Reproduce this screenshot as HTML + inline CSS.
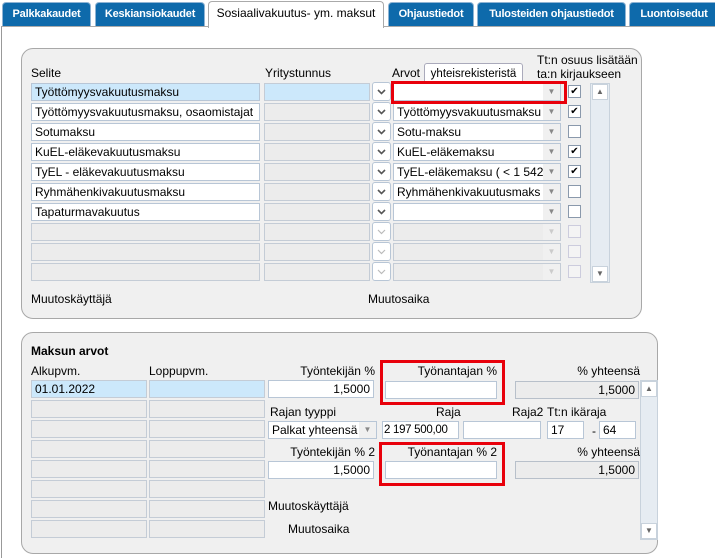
<!DOCTYPE html>
<html><head><meta charset="utf-8"><style>
*{box-sizing:border-box;margin:0;padding:0}
body{width:715px;height:558px;background:#fff;font-family:"Liberation Sans",Arial,sans-serif;font-size:12px;color:#000;position:relative;overflow:hidden}
.a{position:absolute;white-space:nowrap}
.tab{position:absolute;top:2px;height:24px;background:#0e6aab;color:#fff;font-weight:bold;font-size:11px;line-height:23px;text-align:center;border:1px solid #8fb4d4;border-bottom:none;border-radius:4px 4px 0 0;letter-spacing:-0.2px}
.tab.on{background:#fff;color:#000;font-weight:normal;font-size:12px;border:1px solid #aaa;border-bottom:none;top:1px;height:27px;letter-spacing:0}
.frame{position:absolute;left:1px;top:26px;width:714px;height:532px;border-left:1px solid #999;border-top:1px solid #aaa}
.panel{position:absolute;background:#f0f0f0;border:1px solid #a8a8a8;border-radius:12px}
.in{position:absolute;height:18px;border:1px solid #b8c6d6;background:#fff;padding:0 3px;line-height:16px;overflow:hidden;white-space:nowrap}
.g{background:#ececec;border-color:#c4ccd6}
.b{background:#cce8fb}
.r{text-align:right}
.dd{position:absolute;width:19px;height:19px;border:1px solid #b8c6d6;border-radius:3px;background:#fff}
.dd svg{position:absolute;left:4px;top:6px}
.arr{position:absolute;right:0;top:0;width:17px;height:16px;background:#f0f0f0;color:#888;font-size:8px;text-align:center;line-height:16px}
.cb{position:absolute;width:13px;height:13px;border:1px solid #8a99ac;background:#fff;font-size:10px;line-height:11px;text-align:center}
.cb.d{border-color:#ccd;background:#f4f4f4}
.red{position:absolute;border:3px solid #e8000b}
.sb{position:absolute;background:#e6ecf2;border:1px solid #c8d2dc}
.sbb{position:absolute;left:1px;width:16px;height:16px;background:#fff;border:1px solid #c8d2dc;color:#666;font-size:8px;text-align:center;line-height:14px}
</style></head><body>
<div class="frame"></div>
<div class="tab" style="left:2px;width:89px">Palkkakaudet</div>
<div class="tab" style="left:95px;width:110px">Keskiansiokaudet</div>
<div class="tab on" style="left:208px;width:176px">Sosiaalivakuutus- ym. maksut</div>
<div class="tab" style="left:388px;width:86px">Ohjaustiedot</div>
<div class="tab" style="left:477px;width:149px">Tulosteiden ohjaustiedot</div>
<div class="tab" style="left:629px;width:90px">Luontoisedut</div>

<div class="panel" style="left:21px;top:48px;width:621px;height:271px"></div>
<div class="a" style="left:31px;top:66px">Selite</div>
<div class="a" style="left:265px;top:66px">Yritystunnus</div>
<div class="a" style="left:392px;top:66px">Arvot</div>
<div class="a" style="left:424px;top:63px;width:99px;height:21px;border:1px solid #aab;border-bottom:none;border-radius:3px 3px 0 0;background:#fff;text-align:center;line-height:20px;font-size:11.5px">yhteisrekisteristä</div>
<div class="a" style="left:537px;top:53px">Tt:n osuus lisätään</div>
<div class="a" style="left:537px;top:67px">ta:n kirjaukseen</div>

<div class="in b" style="left:31px;top:83px;width:229px">Työttömyysvakuutusmaksu</div>
<div class="in" style="left:31px;top:103px;width:229px">Työttömyysvakuutusmaksu, osaomistajat</div>
<div class="in" style="left:31px;top:123px;width:229px">Sotumaksu</div>
<div class="in" style="left:31px;top:143px;width:229px">KuEL-eläkevakuutusmaksu</div>
<div class="in" style="left:31px;top:163px;width:229px">TyEL - eläkevakuutusmaksu</div>
<div class="in" style="left:31px;top:183px;width:229px">Ryhmähenkivakuutusmaksu</div>
<div class="in" style="left:31px;top:203px;width:229px">Tapaturmavakuutus</div>
<div class="in g" style="left:31px;top:223px;width:229px"></div>
<div class="in g" style="left:31px;top:243px;width:229px"></div>
<div class="in g" style="left:31px;top:263px;width:229px"></div>

<div class="in b" style="left:264px;top:83px;width:106px;border-color:#c4ccd6"></div>
<div class="in g" style="left:264px;top:103px;width:106px"></div>
<div class="in g" style="left:264px;top:123px;width:106px"></div>
<div class="in g" style="left:264px;top:143px;width:106px"></div>
<div class="in g" style="left:264px;top:163px;width:106px"></div>
<div class="in g" style="left:264px;top:183px;width:106px"></div>
<div class="in g" style="left:264px;top:203px;width:106px"></div>
<div class="in g" style="left:264px;top:223px;width:106px"></div>
<div class="in g" style="left:264px;top:243px;width:106px"></div>
<div class="in g" style="left:264px;top:263px;width:106px"></div>

<div class="dd" style="left:372px;top:82px"><svg width="9" height="6"><path d="M1 1L4.5 4.5L8 1" stroke="#555" stroke-width="1.6" fill="none"/></svg></div>
<div class="dd" style="left:372px;top:102px"><svg width="9" height="6"><path d="M1 1L4.5 4.5L8 1" stroke="#555" stroke-width="1.6" fill="none"/></svg></div>
<div class="dd" style="left:372px;top:122px"><svg width="9" height="6"><path d="M1 1L4.5 4.5L8 1" stroke="#555" stroke-width="1.6" fill="none"/></svg></div>
<div class="dd" style="left:372px;top:142px"><svg width="9" height="6"><path d="M1 1L4.5 4.5L8 1" stroke="#555" stroke-width="1.6" fill="none"/></svg></div>
<div class="dd" style="left:372px;top:162px"><svg width="9" height="6"><path d="M1 1L4.5 4.5L8 1" stroke="#555" stroke-width="1.6" fill="none"/></svg></div>
<div class="dd" style="left:372px;top:182px"><svg width="9" height="6"><path d="M1 1L4.5 4.5L8 1" stroke="#555" stroke-width="1.6" fill="none"/></svg></div>
<div class="dd" style="left:372px;top:202px"><svg width="9" height="6"><path d="M1 1L4.5 4.5L8 1" stroke="#555" stroke-width="1.6" fill="none"/></svg></div>
<div class="dd" style="left:372px;top:222px"><svg width="9" height="6"><path d="M1 1L4.5 4.5L8 1" stroke="#bbb" stroke-width="1.2" fill="none"/></svg></div>
<div class="dd" style="left:372px;top:242px"><svg width="9" height="6"><path d="M1 1L4.5 4.5L8 1" stroke="#bbb" stroke-width="1.2" fill="none"/></svg></div>
<div class="dd" style="left:372px;top:262px"><svg width="9" height="6"><path d="M1 1L4.5 4.5L8 1" stroke="#bbb" stroke-width="1.2" fill="none"/></svg></div>

<div class="in" style="left:393px;top:83px;width:168px"><span class="arr">&#9660;</span></div>
<div class="in" style="left:393px;top:103px;width:168px">Työttömyysvakuutusmaksu<span class="arr">&#9660;</span></div>
<div class="in" style="left:393px;top:123px;width:168px">Sotu-maksu<span class="arr">&#9660;</span></div>
<div class="in" style="left:393px;top:143px;width:168px">KuEL-eläkemaksu<span class="arr">&#9660;</span></div>
<div class="in" style="left:393px;top:163px;width:168px">TyEL-eläkemaksu ( &lt; 1 542<span class="arr">&#9660;</span></div>
<div class="in" style="left:393px;top:183px;width:168px">Ryhmähenkivakuutusmaks<span class="arr">&#9660;</span></div>
<div class="in" style="left:393px;top:203px;width:168px"><span class="arr">&#9660;</span></div>
<div class="in g" style="left:393px;top:223px;width:168px"><span class="arr" style="color:#ccc">&#9660;</span></div>
<div class="in g" style="left:393px;top:243px;width:168px"><span class="arr" style="color:#ccc">&#9660;</span></div>
<div class="in g" style="left:393px;top:263px;width:168px"><span class="arr" style="color:#ccc">&#9660;</span></div>
<div class="red" style="left:391px;top:81px;width:176px;height:23px"></div>

<div class="cb" style="left:568px;top:85px">&#10004;</div>
<div class="cb" style="left:568px;top:105px">&#10004;</div>
<div class="cb" style="left:568px;top:125px"></div>
<div class="cb" style="left:568px;top:145px">&#10004;</div>
<div class="cb" style="left:568px;top:165px">&#10004;</div>
<div class="cb" style="left:568px;top:185px"></div>
<div class="cb" style="left:568px;top:205px"></div>
<div class="cb d" style="left:568px;top:225px"></div>
<div class="cb d" style="left:568px;top:245px"></div>
<div class="cb d" style="left:568px;top:265px"></div>

<div class="sb" style="left:590px;top:83px;width:20px;height:200px">
<div class="sbb" style="top:0">&#9650;</div><div class="sbb" style="bottom:0">&#9660;</div></div>

<div class="a" style="left:31px;top:292px">Muutoskäyttäjä</div>
<div class="a" style="left:368px;top:292px">Muutosaika</div>

<div class="panel" style="left:21px;top:332px;width:637px;height:222px"></div>
<div class="a" style="left:31px;top:344px;font-weight:bold">Maksun arvot</div>
<div class="a" style="left:31px;top:364px">Alkupvm.</div>
<div class="a" style="left:149px;top:364px">Loppupvm.</div>

<div class="in b" style="left:31px;top:380px;width:116px;border-color:#c4ccd6">01.01.2022</div>
<div class="in b" style="left:149px;top:380px;width:116px;border-color:#c4ccd6"></div>
<div class="in g" style="left:31px;top:400px;width:116px"></div><div class="in g" style="left:149px;top:400px;width:116px"></div>
<div class="in g" style="left:31px;top:420px;width:116px"></div><div class="in g" style="left:149px;top:420px;width:116px"></div>
<div class="in g" style="left:31px;top:440px;width:116px"></div><div class="in g" style="left:149px;top:440px;width:116px"></div>
<div class="in g" style="left:31px;top:460px;width:116px"></div><div class="in g" style="left:149px;top:460px;width:116px"></div>
<div class="in g" style="left:31px;top:480px;width:116px"></div><div class="in g" style="left:149px;top:480px;width:116px"></div>
<div class="in g" style="left:31px;top:500px;width:116px"></div><div class="in g" style="left:149px;top:500px;width:116px"></div>
<div class="in g" style="left:31px;top:520px;width:116px"></div><div class="in g" style="left:149px;top:520px;width:116px"></div>

<div class="a" style="left:268px;top:364px;width:107px;text-align:right">Työntekijän %</div>
<div class="in r" style="left:268px;top:380px;width:106px">1,5000</div>
<div class="a" style="left:385px;top:364px;width:112px;text-align:right">Työnantajan %</div>
<div class="in" style="left:385px;top:381px;width:112px"></div>
<div class="red" style="left:380px;top:360px;width:125px;height:45px"></div>
<div class="a" style="left:515px;top:364px;width:125px;text-align:right">% yhteensä</div>
<div class="in g r" style="left:515px;top:381px;width:124px;border-color:#b8c0ca">1,5000</div>

<div class="a" style="left:270px;top:405px">Rajan tyyppi</div>
<div class="in" style="left:268px;top:421px;width:109px;padding-left:3px">Palkat yhteensä<span class="arr" style="height:16px">&#9660;</span></div>
<div class="a" style="left:436px;top:405px">Raja</div>
<div class="in" style="left:382px;top:421px;width:77px;padding:0 1px;font-size:11.5px;letter-spacing:-0.3px">2 197 500,00</div>
<div class="a" style="left:512px;top:405px">Raja2</div>
<div class="a" style="left:547px;top:405px">Tt:n ikäraja</div>
<div class="in" style="left:463px;top:421px;width:78px"></div>
<div class="in" style="left:547px;top:421px;width:37px">17</div>
<div class="a" style="left:592px;top:424px">-</div>
<div class="in" style="left:599px;top:421px;width:37px">64</div>

<div class="a" style="left:268px;top:445px;width:107px;text-align:right">Työntekijän % 2</div>
<div class="in r" style="left:268px;top:461px;width:106px">1,5000</div>
<div class="a" style="left:385px;top:445px;width:112px;text-align:right">Työnantajan % 2</div>
<div class="in" style="left:385px;top:461px;width:112px"></div>
<div class="red" style="left:379px;top:442px;width:126px;height:44px"></div>
<div class="a" style="left:515px;top:445px;width:125px;text-align:right">% yhteensä</div>
<div class="in g r" style="left:515px;top:461px;width:124px;border-color:#b8c0ca">1,5000</div>

<div class="a" style="left:268px;top:499px">Muutoskäyttäjä</div>
<div class="a" style="left:288px;top:522px">Muutosaika</div>

<div class="sb" style="left:640px;top:380px;width:18px;height:160px">
<div class="sbb" style="top:0;left:0">&#9650;</div><div class="sbb" style="bottom:0;left:0">&#9660;</div></div>
</body></html>
